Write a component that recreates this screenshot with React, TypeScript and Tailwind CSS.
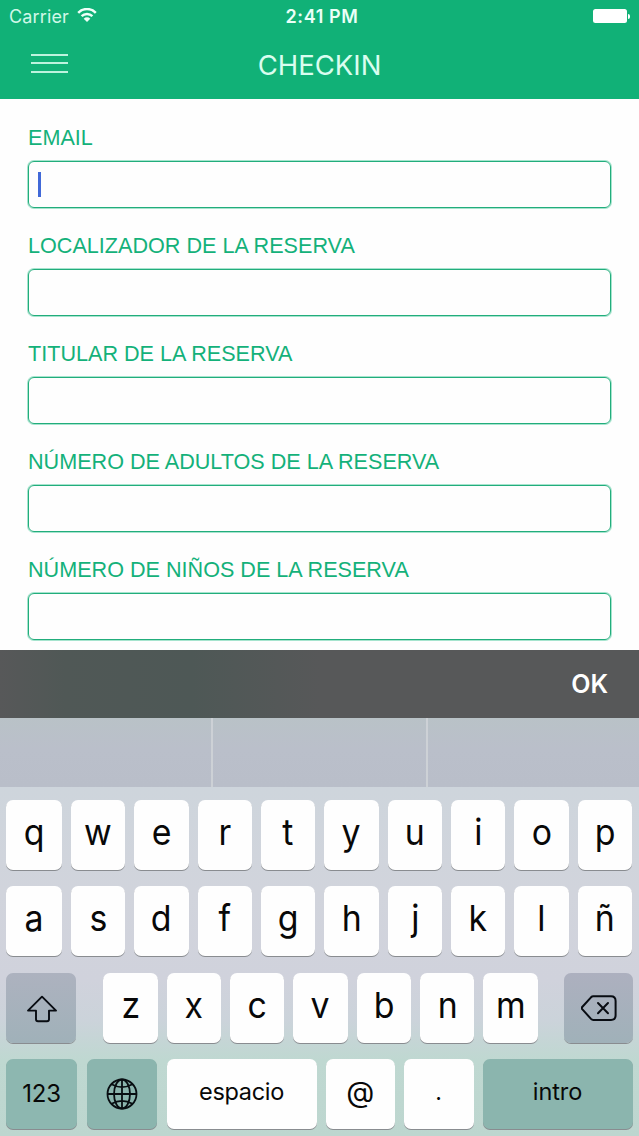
import type { ReactNode } from 'react';

const fields = [
  { label: 'EMAIL', focused: true },
  { label: 'LOCALIZADOR DE LA RESERVA' },
  { label: 'TITULAR DE LA RESERVA' },
  { label: 'NÚMERO DE ADULTOS DE LA RESERVA' },
  { label: 'NÚMERO DE NIÑOS DE LA RESERVA' },
];

function Key({ children, className = '' }: { children: ReactNode; className?: string }) {
  return (
    <button
      className={`flex h-[70px] items-center justify-center rounded-[7px] text-[#080808] shadow-[0_1px_0_#898c90] ${className}`}
    >
      {children}
    </button>
  );
}

function Letter({ children, className = 'w-[54.35px]' }: { children: string; className?: string }) {
  return (
    <Key className={`bg-[#fefefe] pb-1.5 text-[36px] leading-none font-normal ${className}`}>
      <span className="inline-block scale-x-[0.94]">{children}</span>
    </Key>
  );
}

function StatusBar() {
  return (
    <div className="flex h-8 items-center text-[18px] leading-8">
      <div className="flex flex-1 items-center pt-px pl-[9px] font-normal text-[#d0f8e8]">
        <span className="tracking-[0.15px]">Carrier</span>
        <svg className="mb-[3px] ml-[8px] h-[14px] w-5" viewBox="0 0 20 14" fill="none" stroke="#f0fff9">
          <path d="M1.2 4.8C6 -.2 14 -.2 18.8 4.8" strokeWidth="2.5" />
          <path d="M4.6 8.2C7.6 5.2 12.4 5.2 15.4 8.2" strokeWidth="2.4" />
          <path d="M10 14L6.7 10.7C8.6 8.9 11.4 8.9 13.3 10.7Z" fill="#f0fff9" stroke="none" />
        </svg>
      </div>
      <div className="pt-px pl-[5px] font-semibold tracking-[0.6px] text-[#eafff7]">2:41 PM</div>
      <div className="flex flex-1 items-center justify-end pr-[9px]">
        <div className="h-[14px] w-[34px] rounded-[2.5px] bg-white" />
        <div className="ml-px h-[5px] w-[2px] rounded-r-full bg-white" />
      </div>
    </div>
  );
}

export default function App() {
  return (
    <div className="flex h-[1136px] w-[639px] flex-col overflow-hidden bg-[#fefefe] font-['Inter',sans-serif]">
      <header className="h-[99px] shrink-0 bg-[#11b177]">
        <StatusBar />
        <div className="grid h-[66px] grid-cols-[1fr_auto_1fr] items-center">
          <div className="flex w-[68px] flex-col pb-[3px] pl-[31px]">
            <div className="h-[2px] w-[37px] bg-[#bdf3de]" />
            <div className="mt-[6px] h-[2px] w-[37px] bg-[#bdf3de]" />
            <div className="mt-[7px] h-[2px] w-[37px] bg-[#bdf3de]" />
          </div>
          <h1 className="pt-px text-[27.5px] leading-[65px] font-normal text-[#d9fdef]">CHECKIN</h1>
        </div>
      </header>

      <main className="flex h-[551px] shrink-0 flex-col overflow-hidden px-7 pt-[21px]">
        {fields.map((field) => (
          <label key={field.label} className="block h-[108px] shrink-0">
            <span className="block h-[41px] font-['Liberation_Sans',sans-serif] text-[21.6px] leading-[36px] text-[#14b17a]">
              {field.label}
            </span>
            <span className="flex h-[47px] items-center rounded-[6px] border border-[#22ad7c] pl-[9px] shadow-[0_0_0_1px_rgba(34,190,135,0.4)]">
              {field.focused && <span className="h-[25px] w-[3px] bg-[#4169d8]" />}
            </span>
          </label>
        ))}
      </main>

      <div className="flex h-[68px] shrink-0 items-center justify-end bg-[linear-gradient(90deg,#575859_0%,#505856_10%,#4e5856_30%,#575859_50%,#575859_100%)] pr-[31px]">
        <button className="pt-px text-[25px] font-semibold text-white">OK</button>
      </div>

      <div className="grid h-[69px] shrink-0 grid-cols-[213px_215px_1fr] bg-[linear-gradient(#b9c2c7,#babfca_45%,#b9bec9)]">
        <div className="border-r-2 border-[#cdd1d6]" />
        <div className="border-r-2 border-[#cdd1d6]" />
        <div />
      </div>

      <section className="flex h-[350px] shrink-0 flex-col gap-[16.5px] bg-[linear-gradient(#ced5dc,#d1d4dc_30%,#d0d2dc_55%,#cbd3da_67%,#bfd8d1_78%,#bdd6cf_100%)] pt-[12.5px] pl-[6px]">
        <div className="flex gap-[9px]">
          {'qwertyuiop'.split('').map((letter, index) => (
            <Letter key={letter} className={index === 0 ? 'w-[56px]' : 'w-[54.35px]'}>{letter}</Letter>
          ))}
        </div>
        <div className="flex gap-[9px]">
          {'asdfghjklñ'.split('').map((letter, index) => (
            <Letter key={letter} className={index === 0 ? 'w-[56px]' : 'w-[54.35px]'}>{letter}</Letter>
          ))}
        </div>
        <div className="flex">
          <Key className="w-[69.5px] bg-[linear-gradient(#adb2bf,#a0b1b9)] pl-[2px]">
            <svg className="h-8 w-8" viewBox="0 0 32 32" fill="none" stroke="#080c12" strokeWidth="1.9" strokeLinejoin="round">
              <path d="M16 4.7L30 18.6H23V27.3Q23 29.3 21 29.3H12Q10 29.3 10 27.3V18.6H2Z" />
            </svg>
          </Key>
          <div className="ml-[27.8px] flex gap-[9px]">
            {'zxcvbnm'.split('').map((letter) => (
              <Letter key={letter}>{letter}</Letter>
            ))}
          </div>
          <Key className="ml-[26.3px] w-[69px] bg-[linear-gradient(#adb0bf,#a0b1b9)]">
            <svg className="h-7 w-9" viewBox="0 0 36 28" fill="none" stroke="#080c12" strokeWidth="2" strokeLinejoin="round">
              <path d="M12.3 2.3H30Q34.6 2.3 34.6 6.9V21.3Q34.6 25.9 30 25.9H12.3Q11 25.9 10 24.9L1.2 15.2Q.3 14.1 1.2 13L10 3.3Q11 2.3 12.3 2.3Z" />
              <path d="M17 9L27 19.2M27 9L17 19.2" strokeLinecap="round" />
            </svg>
          </Key>
        </div>
        <div className="flex">
          <Key className="w-[71px] bg-[#8db7b0] text-[24px] font-normal tracking-[-0.2px]">123</Key>
          <Key className="ml-[10px] w-[70px] bg-[#8bb5ae]">
            <svg className="h-8 w-8" viewBox="0 0 32 32" fill="none" stroke="#080e12" strokeWidth="1.8">
              <circle cx="16" cy="16" r="14.5" />
              <ellipse cx="16" cy="16" rx="8" ry="14.5" />
              <path d="M16 1.5V30.5M1.5 16H30.5M5.5 6.2Q16 12 26.5 6.2M5.5 25.8Q16 20 26.5 25.8" />
            </svg>
          </Key>
          <Key className="ml-[9.5px] w-[150px] bg-[#fefefe] pb-1 text-[23.5px] tracking-[-0.3px]">espacio</Key>
          <Key className="ml-[9px] w-[69.5px] bg-[#fefefe] pb-1 text-[29px] font-normal">@</Key>
          <Key className="ml-[8.5px] w-[70px] bg-[#fefefe] pb-1 text-[23px] font-normal">.</Key>
          <Key className="ml-[9px] w-[150px] bg-[#8bb5ae] pb-1 text-[23.5px] tracking-[-0.1px]">intro</Key>
        </div>
      </section>
    </div>
  );
}
